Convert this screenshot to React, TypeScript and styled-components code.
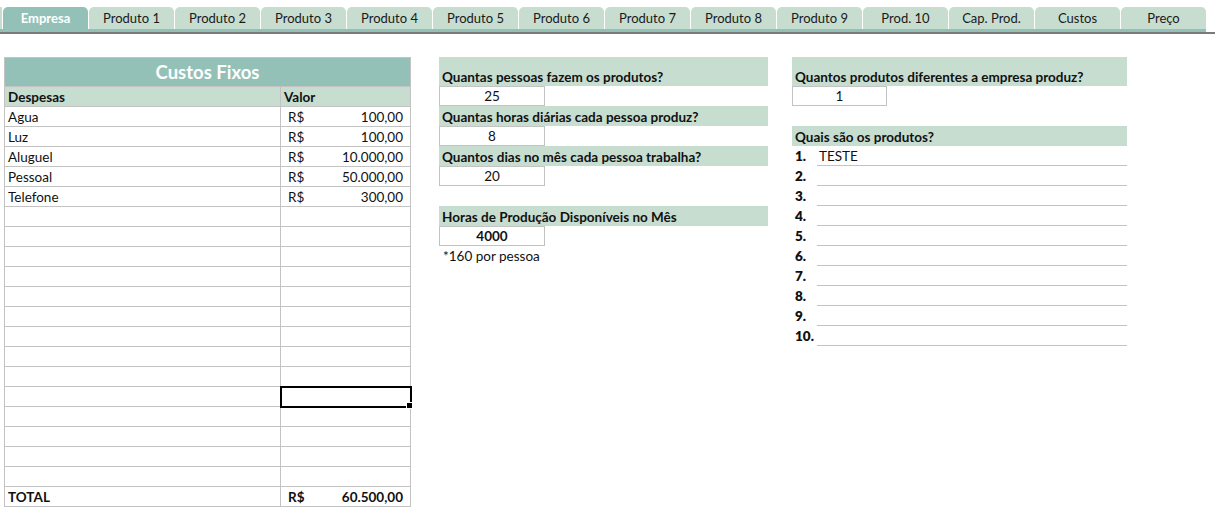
import React from 'react';
import styled, { createGlobalStyle } from 'styled-components';

const GlobalStyle = createGlobalStyle`
  html, body {
    margin: 0;
    padding: 0;
    background: #fff;
    font-family: Lato, "Open Sans", sans-serif;
    color: #111;
  }
`;

const TEAL = '#93c1b7';
const MINT = '#c7ddd0';
const GRID = '#c3c3c3';

const Sheet = styled.div`
  width: 1215px;
  height: 527px;
  overflow: hidden;
`;

const TabStrip = styled.div`
  padding-top: 7px;
  border-bottom: 2px solid #7a7a7a;
`;

const TabRow = styled.div`
  display: flex;
  gap: 1px;
  height: 22px;
`;

const TabEdge = styled.div`
  width: 2px;
  background: ${MINT};
`;

const Tab = styled.div<{ $active?: boolean }>`
  width: 85px;
  display: flex;
  align-items: center;
  justify-content: center;
  border-radius: 5px 5px 0 0;
  background: ${(p) => (p.$active ? TEAL : MINT)};
  color: ${(p) => (p.$active ? '#fff' : '#1a1a1a')};
  font-weight: ${(p) => (p.$active ? 700 : 400)};
  font-size: 13px;
`;

const TabUnderline = styled.div`
  width: 1206px;
  height: 3px;
  background: ${TEAL};
`;

const Content = styled.div`
  display: flex;
  align-items: flex-start;
  padding: 23px 0 0 4px;
`;

const CostTable = styled.table`
  border-collapse: collapse;
  width: 406px;
  table-layout: fixed;
  font-size: 13.5px;
  margin-right: 28px;
`;

const TitleCell = styled.th`
  height: 28px;
  padding: 0;
  background: ${TEAL};
  color: #fff;
  font-size: 18.5px;
  font-weight: 700;
  border: 1px solid ${GRID};
  text-align: center;
`;

const HeadCell = styled.th`
  height: 19px;
  padding: 0 3px;
  background: ${MINT};
  font-weight: 700;
  text-align: left;
  border: 1px solid ${GRID};
`;

const Cell = styled.td<{ $bold?: boolean; $selected?: boolean }>`
  position: relative;
  height: 19px;
  padding: 0 3px;
  border: 1px solid ${GRID};
  font-weight: ${(p) => (p.$bold ? 700 : 400)};
  white-space: nowrap;
  ${(p) => (p.$selected ? 'outline: 2px solid #000; outline-offset: -1px;' : '')}
`;

const Money = styled.div`
  display: flex;
  justify-content: space-between;
  padding: 0 4px 0 4px;
`;

const FillHandle = styled.span`
  position: absolute;
  right: -3px;
  bottom: -3px;
  width: 5px;
  height: 5px;
  background: #000;
  border: 1px solid #fff;
`;

const Column = styled.div<{ $width: number; $gap: number }>`
  width: ${(p) => p.$width}px;
  margin-right: ${(p) => p.$gap}px;
  display: flex;
  flex-direction: column;
  font-size: 13.5px;
`;

const Question = styled.div<{ $tall?: boolean }>`
  height: ${(p) => (p.$tall ? 29 : 20)}px;
  display: flex;
  align-items: flex-end;
  padding: 0 3px 1px;
  box-sizing: border-box;
  background: ${MINT};
  font-weight: 700;
`;

const Answer = styled.div<{ $width: number; $bold?: boolean }>`
  width: ${(p) => p.$width}px;
  height: 20px;
  box-sizing: border-box;
  border: 1px solid ${GRID};
  display: flex;
  align-items: center;
  justify-content: center;
  font-weight: ${(p) => (p.$bold ? 700 : 400)};
`;

const Spacer = styled.div`
  height: 20px;
`;

const Note = styled.div`
  height: 20px;
  display: flex;
  align-items: center;
  padding-left: 4px;
`;

const ListRow = styled.div`
  display: flex;
  height: 20px;
`;

const ListNum = styled.div`
  width: 25px;
  padding-left: 3px;
  box-sizing: border-box;
  display: flex;
  align-items: center;
  font-weight: 800;
`;

const ListLine = styled.div`
  flex: 1;
  border-bottom: 1px solid ${GRID};
  display: flex;
  align-items: center;
  padding-left: 2px;
`;

const tabs = [
  'Empresa', 'Produto 1', 'Produto 2', 'Produto 3', 'Produto 4', 'Produto 5',
  'Produto 6', 'Produto 7', 'Produto 8', 'Produto 9', 'Prod. 10', 'Cap. Prod.',
  'Custos', 'Preço',
];

const costs: [string, string][] = [
  ['Agua', '100,00'],
  ['Luz', '100,00'],
  ['Aluguel', '10.000,00'],
  ['Pessoal', '50.000,00'],
  ['Telefone', '300,00'],
];

const EMPTY_ROWS = 14;
const SELECTED_ROW = 9;

export default function App() {
  return (
    <Sheet>
      <GlobalStyle />
      <TabStrip>
        <TabRow>
          <TabEdge />
          {tabs.map((t, i) => (
            <Tab key={t} $active={i === 0}>
              {t}
            </Tab>
          ))}
        </TabRow>
        <TabUnderline />
      </TabStrip>

      <Content>
        <CostTable>
          <colgroup>
            <col style={{ width: 276 }} />
            <col style={{ width: 130 }} />
          </colgroup>
          <thead>
            <tr>
              <TitleCell colSpan={2}>Custos Fixos</TitleCell>
            </tr>
            <tr>
              <HeadCell>Despesas</HeadCell>
              <HeadCell>Valor</HeadCell>
            </tr>
          </thead>
          <tbody>
            {costs.map(([name, value]) => (
              <tr key={name}>
                <Cell>{name}</Cell>
                <Cell>
                  <Money>
                    <span>R$</span>
                    <span>{value}</span>
                  </Money>
                </Cell>
              </tr>
            ))}
            {Array.from({ length: EMPTY_ROWS }).map((_, i) => (
              <tr key={i}>
                <Cell />
                <Cell $selected={i === SELECTED_ROW}>
                  {i === SELECTED_ROW && <FillHandle />}
                </Cell>
              </tr>
            ))}
            <tr>
              <Cell $bold>TOTAL</Cell>
              <Cell $bold>
                <Money>
                  <span>R$</span>
                  <span>60.500,00</span>
                </Money>
              </Cell>
            </tr>
          </tbody>
        </CostTable>

        <Column $width={329} $gap={24}>
          <Question $tall>Quantas pessoas fazem os produtos?</Question>
          <Answer $width={106}>25</Answer>
          <Question>Quantas horas diárias cada pessoa produz?</Question>
          <Answer $width={106}>8</Answer>
          <Question>Quantos dias no mês cada pessoa trabalha?</Question>
          <Answer $width={106}>20</Answer>
          <Spacer />
          <Question>Horas de Produção Disponíveis no Mês</Question>
          <Answer $width={106} $bold>4000</Answer>
          <Note>*160 por pessoa</Note>
        </Column>

        <Column $width={335} $gap={0}>
          <Question $tall>Quantos produtos diferentes a empresa produz?</Question>
          <Answer $width={95}>1</Answer>
          <Spacer />
          <Question>Quais são os produtos?</Question>
          {Array.from({ length: 10 }).map((_, i) => (
            <ListRow key={i}>
              <ListNum>{i + 1}.</ListNum>
              <ListLine>{i === 0 ? 'TESTE' : ''}</ListLine>
            </ListRow>
          ))}
        </Column>
      </Content>
    </Sheet>
  );
}
